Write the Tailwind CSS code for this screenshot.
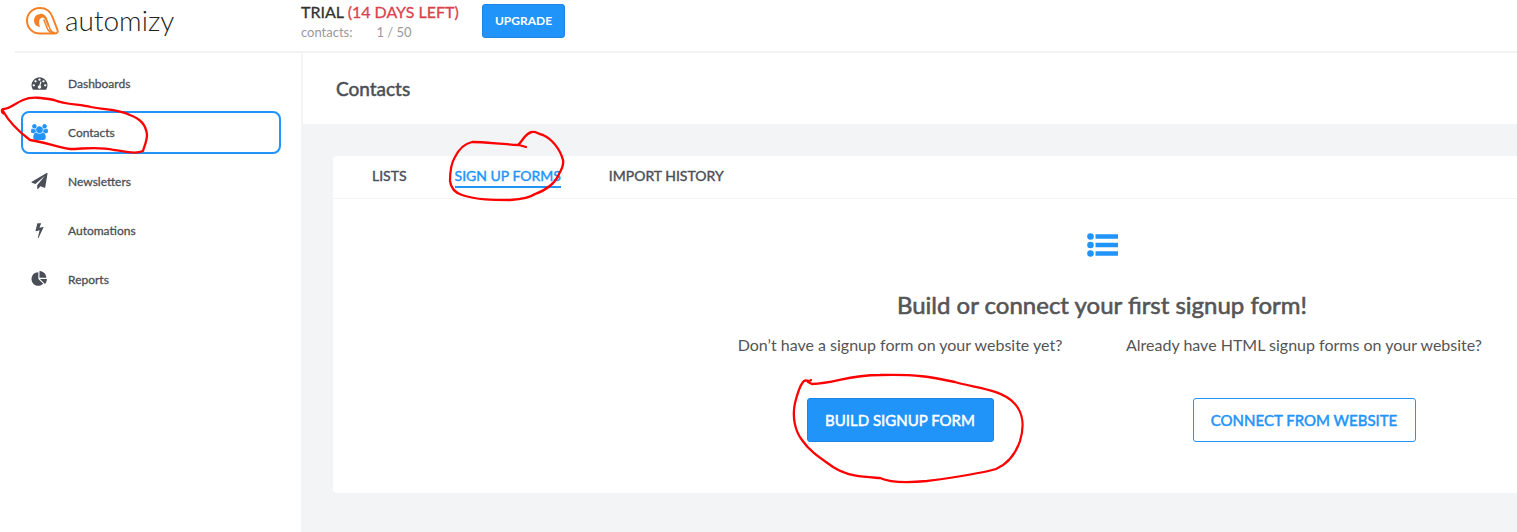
<!DOCTYPE html>
<html lang="en">
<head>
  <meta charset="UTF-8" />
  <meta name="viewport" content="width=device-width, initial-scale=1.0" />
  <title>Automizy | Contacts</title>
  <script src="https://cdn.jsdelivr.net/npm/@tailwindcss/browser@4"></script>
</head>
<body class="relative min-h-screen flex flex-col bg-white font-[Lato,sans-serif] text-[#4a4f57] overflow-x-hidden">

  <!-- Top bar -->
  <header class="ml-[15px] h-[53px] flex items-start border-b-2 border-[#f3f3f4]">
    <a href="#" class="w-[286px] shrink-0 pl-[10px] pt-[5px] flex items-start gap-[5px] text-[#231f20]">
      <svg class="w-[35px] h-[31px]" viewBox="0 0 35 31" fill="none" stroke="#f58025" stroke-linecap="round" stroke-linejoin="round">
        <path stroke-width="2" d="M15 28.500C7 28.500 2 22.500 2 15.500S7.500 3 15 3c6.500 0 10.500 3.500 12.500 9l5 13c.8 2-.3 3.500-2.500 3.500z" />
        <path stroke-width="1.500" d="M29.500 27.500c-2.500 0-3.500-1-4.300-3L21.500 14.500C20.300 11 18 9.500 15.500 9.500" />
        <path stroke-width="1.500" d="M28 28C25 27.500 23.500 26 22.500 24L19 15" />
        <path fill="#f58025" stroke="none" d="M15 22c-3.500-.3-6-3-6-6.500 0-3.700 2.800-6.500 6.500-6.500 3.200 0 5.200 1.800 6.300 4.800l2.200 6.200-1.500.5-2-5c-.8-2.200-2-3.300-3.800-2.800-2.600.8-3.200 4.300-1.700 9.300z" />
      </svg>
      <span class="text-[28px] leading-[30px] font-light">automizy</span>
    </a>
    <div class="w-[181px] pt-[2px]">
      <p class="text-[16px] leading-5 text-[#333] [-webkit-text-stroke:0.3px]">TRIAL <span class="text-[#d9444c]">(14 DAYS LEFT)</span></p>
      <p class="flex gap-6 text-[13px] leading-5 text-[#999]"><span>contacts:</span><span>1 / 50</span></p>
    </div>
    <button class="mt-1 h-[34px] w-[83px] rounded-[3px] border border-[#1a85e6] bg-[#2194fa] text-white text-[12px] font-bold">UPGRADE</button>
  </header>

  <div class="flex grow">
    <!-- Sidebar -->
    <nav class="w-[303px] shrink-0 border-r-2 border-[#f3f4f6] pl-[21px] pr-5 pt-[9px] flex flex-col gap-[6px] text-[12px] [-webkit-text-stroke:0.3px]">
      <a href="#" class="h-[43px] flex items-center rounded-lg border-2 border-transparent pl-2">
        <svg class="w-[17px] h-4 mr-5 mb-[2px]" viewBox="0 0 1792 1792" fill="currentColor"><path d="M384 1152q0-53-37.500-90.500T256 1024t-90.500 37.500T128 1152t37.500 90.500T256 1280t90.500-37.500T384 1152zm192-448q0-53-37.500-90.500T448 576t-90.500 37.500T320 704t37.500 90.500T448 832t90.500-37.500T576 704zm428 481l101-382q6-26-7.500-48.500T1059 725t-48 6.500-30 39.500l-101 382q-60 5-107 43.500t-63 98.500q-20 77 20 146t117 89 146-20 89-117q16-60-6-117t-72-91zm660-33q0-53-37.500-90.500T1536 1024t-90.500 37.500-37.500 90.500 37.500 90.500 90.500 37.500 90.500-37.500 37.500-90.500zm-640-640q0-53-37.500-90.500T896 384t-90.500 37.500T768 512t37.500 90.500T896 640t90.500-37.500T1024 512zm448 192q0-53-37.500-90.500T1344 576t-90.500 37.500T1216 704t37.500 90.500T1344 832t90.500-37.500T1472 704zm320 448q0 261-141 483-19 29-54 29H195q-35 0-54-29Q0 1414 0 1152q0-182 71-348t191-286 286-191 348-71 348 71 286 191 191 286 71 348z" /></svg>
        Dashboards
      </a>
      <a href="#" class="h-[43px] flex items-center rounded-lg border-2 border-[#2194fa] pl-2">
        <svg class="w-[17px] h-4 mr-5 mb-[2px] text-[#2194fa]" viewBox="0 0 1920 1792" fill="currentColor"><path d="M593 896q-162 5-265 128H194q-82 0-138-40.500T0 865q0-353 124-353 6 0 43.500 21t97.500 42.500T384 597q67 0 133-23-5 37-5 66 0 139 81 256zm1071 637q0 120-73 189.500t-194 69.500H523q-121 0-194-69.500T256 1533q0-53 3.500-103.500t14-109T300 1212t43-97.500 62-81 85.500-53.500T602 960q10 0 43 21.500t73 48 107 48 135 21.500 135-21.500 107-48 73-48 43-21.500q61 0 111.500 20t85.500 53.500 62 81 43 97.500 26.500 108.500 14 109 3.500 103.500zM640 256q0 106-75 181t-181 75-181-75-75-181 75-181T384 0t181 75 75 181zm704 384q0 159-112.500 271.500T960 1024 688.500 911.500 576 640t112.500-271.500T960 256t271.500 112.500T1344 640zm576 225q0 78-56 118.500t-138 40.500h-134q-103-123-265-128 81-117 81-256 0-29-5-66 66 23 133 23 59 0 119-21.500t97.500-42.500 43.500-21q124 0 124 353zm-128-609q0 106-75 181t-181 75-181-75-75-181 75-181 181-75 181 75 75 181z" /></svg>
        Contacts
      </a>
      <a href="#" class="h-[43px] flex items-center rounded-lg border-2 border-transparent pl-2">
        <svg class="w-[17px] h-4 mr-5 mb-[2px]" viewBox="0 0 1792 1792" fill="currentColor"><path d="M1764 11q33 24 27 64l-256 1536q-5 29-32 45-14 8-31 8-11 0-24-5l-453-185-242 295q-18 23-49 23-13 0-22-4-19-7-30.500-23.500T640 1728v-349l864-1059-1069 925-395-162q-37-14-40-55-2-40 32-59L1696 9q15-9 32-9 20 0 36 11z" /></svg>
        Newsletters
      </a>
      <a href="#" class="h-[43px] flex items-center rounded-lg border-2 border-transparent pl-2">
        <svg class="w-[17px] h-4 mr-5 mb-[2px]" viewBox="-448 0 1792 1792" fill="currentColor"><path d="M885 566q18 20 7 44l-540 1157q-13 25-42 25-4 0-14-2-17-5-25.500-19t-4.500-30l197-808-406 101q-4 1-12 1-18 0-31-11-18-15-13-39L202 160q4-14 16-23t28-9h328q19 0 32 12.500t13 29.500q0 8-5 18L443 651l396-98q8-2 12-2 19 0 34 15z" /></svg>
        Automations
      </a>
      <a href="#" class="h-[43px] flex items-center rounded-lg border-2 border-transparent pl-2">
        <svg class="w-[17px] h-4 mr-5 mb-[2px]" viewBox="0 0 1792 1792" fill="currentColor"><path d="M768 890l546 546q-106 108-247.500 168T768 1664q-209 0-385.500-103T103 1281.500 0 896t103-385.500T382.500 231 768 128v762zm187 6h773q0 157-60 298.500T1500 1442zm709-128H896V0q209 0 385.500 103T1561 382.500 1664 768z" /></svg>
        Reports
      </a>
    </nav>

    <!-- Content -->
    <main class="grow bg-[#f3f4f6]">
      <div class="bg-white h-[71px] flex items-center pl-[33px] pt-[2px]">
        <h1 class="text-[19px] [-webkit-text-stroke:0.5px]">Contacts</h1>
      </div>

      <section class="mt-8 ml-[30px] h-[337px] bg-white rounded-l">
        <div class="h-[43px] flex items-center gap-12 pl-[39px] border-b border-[#f3f4f6] text-[14px] [-webkit-text-stroke:0.4px]">
          <a href="#" class="border-b-2 border-transparent leading-5">LISTS</a>
          <a href="#" class="border-b-2 border-[#2194fa] text-[#2194fa] leading-5">SIGN UP FORMS</a>
          <a href="#" class="border-b-2 border-transparent leading-5">IMPORT HISTORY</a>
        </div>

        <div class="ml-auto mr-[11px] w-[808px] pt-[34px] flex flex-col items-center text-[#555]">
          <svg class="w-[31px] h-6" viewBox="0 0 31 24" fill="#2194fa">
            <circle cx="3.500" cy="3.500" r="3.300" /><circle cx="3.500" cy="12" r="3.300" /><circle cx="3.500" cy="20.500" r="3.300" />
            <path d="M8.500 1.200H31v4.600H8.500zM8.500 9.700H31v4.600H8.500zM8.500 18.200H31v4.600H8.500z" />
          </svg>
          <h2 class="mt-8 text-[24px] leading-8 [-webkit-text-stroke:0.6px]">Build or connect your first signup form!</h2>
          <div class="mt-3 w-full grid grid-cols-2">
            <div class="flex flex-col items-center gap-[41px]">
              <p class="text-[16px] leading-6">Don’t have a signup form on your website yet?</p>
              <button class="h-11 w-[187px] rounded-[3px] border border-[#1a85e6] bg-[#2194fa] text-white text-[15px] [-webkit-text-stroke:0.5px]">BUILD SIGNUP FORM</button>
            </div>
            <div class="flex flex-col items-center gap-[41px]">
              <p class="text-[16px] leading-6">Already have HTML signup forms on your website?</p>
              <button class="h-11 w-[223px] rounded-[3px] border border-[#2194fa] text-[#2194fa] text-[15px] [-webkit-text-stroke:0.5px]">CONNECT FROM WEBSITE</button>
            </div>
          </div>
        </div>
      </section>
    </main>
  </div>

  <!-- Hand-drawn marks -->
  <svg class="absolute top-0 left-0 w-[1517px] h-[532px] pointer-events-none" viewBox="0 0 1517 532" fill="none" stroke="#f00" stroke-width="2.300" stroke-linecap="round" stroke-linejoin="round">
    <path d="M5 114C1 113 1 109 4 109C9 109 16 103 23 100C32 96 43 98 54 100C66 105 80 104 91 107C105 110 118 109 130 115C140 119 146 124 147 135C147 141 144 147 143 151C137 154 126 152 114 150C97 146 83 149 70 149C54 146 44 142 30 140C18 131 9 122 3 111" />
    <path d="M526 147L519 145C499 144 485 142 472 142C463 144 458 151 455 157C450 165 450 174 450 181C451 189 456 193 462 195C477 200 493 200 510 200C524 199 531 197 535 194C547 190 556 182 559 174C562 169 564 165 563 160C560 149 552 139 543 135C538 134 536 131 532 132C525 133 522 142 518 145" />
    <path d="M811 380C808 383 806 378 803 382C799 387 797 395 795 403C792 417 795 431 802 440C810 452 822 459 833 467C849 477 865 477 880 478C891 483 907 483 927 481C950 478 974 475 996 469C1009 463 1016 453 1020 441C1024 428 1024 413 1014 403C1001 389 975 388 955 382C931 377 916 374 880 375C847 375 837 383 812 384L808 382" />
  </svg>

</body>
</html>
